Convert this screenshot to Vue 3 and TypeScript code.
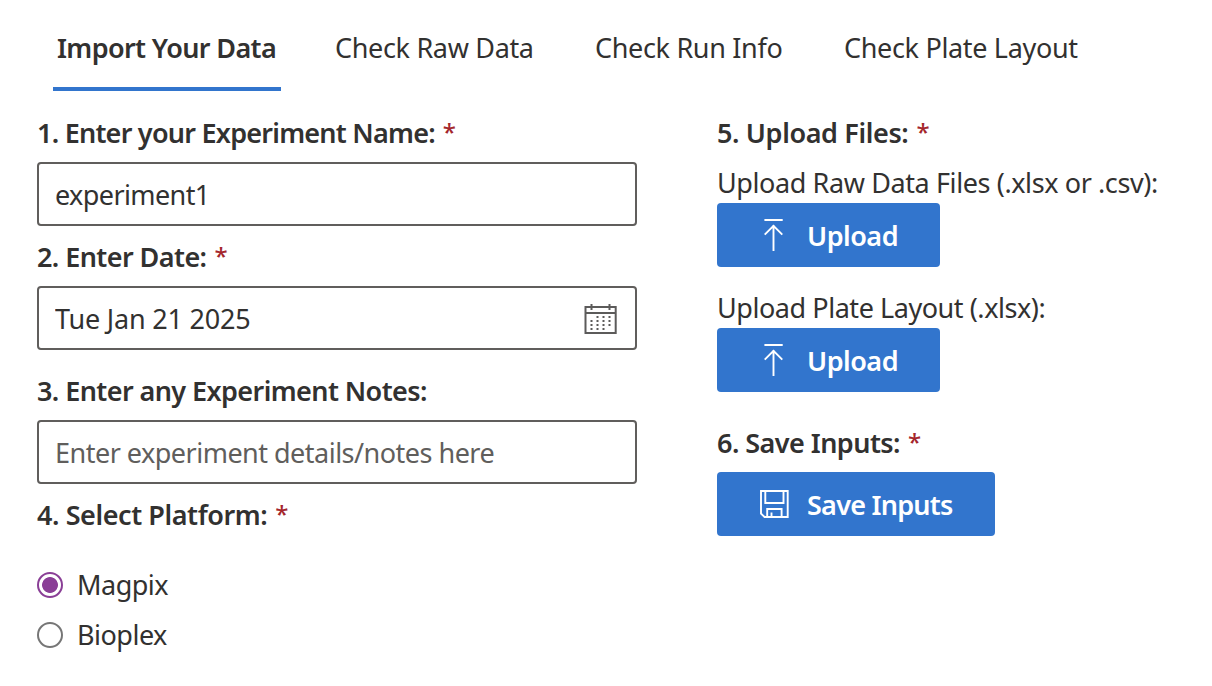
<script setup lang="ts">
import { ref } from 'vue'

const tabs = ['Import Your Data', 'Check Raw Data', 'Check Run Info', 'Check Plate Layout']
const activeTab = ref(0)
const experimentName = ref('experiment1')
const experimentDate = ref('Tue Jan 21 2025')
const notes = ref('')
const platforms = ['Magpix', 'Bioplex']
const platform = ref('Magpix')
const uploads = [
  { label: 'Upload Raw Data Files (.xlsx or .csv):', key: 'raw' },
  { label: 'Upload Plate Layout (.xlsx):', key: 'plate' },
]
const calendarDots = [
  [12.5, 14], [18.5, 14], [24.5, 14],
  [6.5, 18], [12.5, 18], [18.5, 18], [24.5, 18],
  [6.5, 22], [12.5, 22], [18.5, 22], [24.5, 22],
  [6.5, 26], [12.5, 26], [18.5, 26],
]
</script>

<template>
  <main class="page">
    <nav class="tabs" role="tablist">
      <button
        v-for="(tab, i) in tabs"
        :key="tab"
        class="tab"
        :class="['tab-' + i, { active: activeTab === i }]"
        role="tab"
        @click="activeTab = i"
      ><span>{{ tab }}</span></button>
    </nav>
    <div class="columns">
      <section class="left">
        <label class="heading h-name"><span>1. Enter your Experiment Name:</span><i>*</i></label>
        <div class="field"><input v-model="experimentName" class="t-name" /></div>
        <label class="heading h-date"><span>2. Enter Date:</span><i>*</i></label>
        <div class="field">
          <input v-model="experimentDate" class="t-date" />
          <svg class="calendar" width="34" height="32" viewBox="0 0 34 32">
            <path d="M1.5 5H31.7V31H1.5ZM1.5 11H31.7M7.5 2V8M25.5 2V8" fill="none" stroke="#5c5b5a" stroke-width="2" />
            <rect v-for="[x, y] in calendarDots" :key="x + '-' + y" :x="x" :y="y" width="2" height="2" fill="#5c5b5a" />
          </svg>
        </div>
        <label class="heading h-notes"><span>3. Enter any Experiment Notes:</span></label>
        <div class="field"><input v-model="notes" class="t-notes" placeholder="Enter experiment details/notes here" /></div>
        <div class="heading h-platform"><span>4. Select Platform:</span><i>*</i></div>
        <div class="radios" role="radiogroup">
          <label v-for="p in platforms" :key="p" class="radio">
            <input v-model="platform" type="radio" name="platform" :value="p" />
            <span>{{ p }}</span>
          </label>
        </div>
      </section>
      <section class="right">
        <div class="heading h-upload"><span>5. Upload Files:</span><i>*</i></div>
        <div v-for="u in uploads" :key="u.key" class="upload">
          <div class="caption" :class="'c-' + u.key"><span>{{ u.label }}</span></div>
          <button class="primary">
            <svg width="32" height="36" viewBox="0 0 32 36" fill="none" stroke="#fff">
              <path d="M6.4 3H24.7" stroke-width="2" />
              <path d="M15.5 8V34M6.7 17.7L15.5 8.8L24.3 17.7" stroke-width="1.9" />
            </svg>
            <span>Upload</span>
          </button>
        </div>
        <div class="heading h-save"><span>6. Save Inputs:</span><i>*</i></div>
        <button class="primary save">
          <svg width="32" height="36" viewBox="0 0 32 36" fill="none" stroke="#fff" stroke-width="1.9">
            <path d="M3 5H29.7V31H6.5L3 27.5ZM7.3 5V17H25.5V5M9.2 31V23H23.6V31M13.5 31V26.5" />
          </svg>
          <span>Save Inputs</span>
        </button>
      </section>
    </div>
  </main>
</template>

<style>
body {
  background: #fff;
}
</style>

<style scoped>
.page {
  box-sizing: border-box;
  width: 1212px;
  height: 686px;
  padding: 0 0 0 37px;
  overflow: hidden;
  background: #fff;
  color: #323130;
  font: 400 27px/40px "Noto Sans", "Open Sans", sans-serif;
}
button, input {
  font: inherit;
  color: inherit;
}
.page span {
  white-space: nowrap;
}
.tabs {
  display: flex;
  height: 91px;
  padding-left: 16px;
}
.tab {
  box-sizing: border-box;
  flex: none;
  height: 91px;
  padding: 8px 0 0 4px;
  border: 0;
  border-bottom: 4px solid transparent;
  background: none;
  text-align: left;
  letter-spacing: -0.33px;
}
.tab.active {
  border-bottom-color: #3275cd;
  font-weight: 600;
  letter-spacing: -0.62px;
}
.tab-0 { width: 228px; margin-right: 50px; }
.tab-1 { width: 208px; margin-right: 52px; }
.tab-2 { width: 198px; margin-right: 51px; }
.tab-3 { width: 242px; }
.columns {
  display: flex;
  gap: 80px;
  padding-top: 21px;
}
.left {
  flex: none;
  width: 600px;
}
.right {
  flex: none;
  width: 458px;
}
.heading {
  display: flex;
  align-items: center;
  gap: 8px;
  height: 40px;
  margin-bottom: 10px;
  padding-top: 2px;
  box-sizing: border-box;
  font-weight: 600;
}
.heading i {
  padding-bottom: 2px;
  color: #a4262c;
  font-size: 24px;
  font-style: normal;
  font-weight: 500;
}
.field {
  box-sizing: border-box;
  display: flex;
  align-items: center;
  width: 600px;
  height: 64px;
  padding: 0 17px 0 16px;
  border: 2px solid #605e5c;
  border-radius: 4px;
}
.field input {
  flex: 1;
  min-width: 0;
  height: 56px;
  padding: 0;
  border: 0;
  outline: 0;
  background: none;
}
.field input::placeholder {
  color: #605e5c;
  opacity: 1;
}
.field .t-name { letter-spacing: -0.6px; }
.field .t-date { letter-spacing: -0.2px; }
.field .t-notes { letter-spacing: -0.51px; }
.calendar {
  flex: none;
}
.h-name { letter-spacing: -0.76px; }
.h-date { letter-spacing: -0.57px; }
.h-notes { letter-spacing: -0.58px; }
.h-platform { letter-spacing: -0.42px; }
.h-upload { letter-spacing: -0.37px; }
.h-save { letter-spacing: -0.55px; }
.h-date, .h-platform { margin-top: 10px; }
.h-notes { margin-top: 20px; }
.radios {
  padding-top: 14px;
  letter-spacing: -0.5px;
}
.h-platform { margin-bottom: 12px; }
.radio {
  display: flex;
  align-items: center;
  gap: 14px;
  height: 50px;
}
.radio input {
  appearance: none;
  box-sizing: border-box;
  width: 26px;
  height: 26px;
  margin: 0;
  border: 2px solid #767676;
  border-radius: 50%;
}
.radio input:checked {
  border-color: #8a3f96;
  background: radial-gradient(circle, #8a3f96 7.5px, #fff 8.3px);
}
.upload {
  margin-bottom: 20px;
}
.caption {
  height: 41px;
  line-height: 42px;
}
.c-raw { letter-spacing: -0.4px; }
.c-plate { letter-spacing: -0.45px; }
.h-save { margin-top: 30px; }
.primary {
  box-sizing: border-box;
  display: flex;
  align-items: center;
  gap: 17px;
  width: 223px;
  height: 64px;
  padding: 0 0 0 41px;
  border: 0;
  border-radius: 4px;
  background: #3275cd;
  color: #fff;
  font-weight: 600;
  letter-spacing: -0.5px;
}
.primary span {
  padding-top: 2px;
}
.primary.save {
  width: 278px;
  letter-spacing: -0.75px;
}
</style>
